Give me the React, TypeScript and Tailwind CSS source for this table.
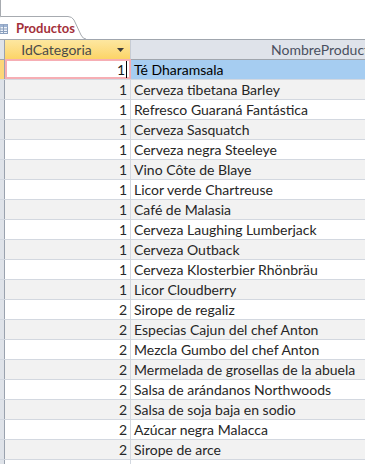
import React from "react";

// rows shown in the datasheet
const rows: [number, string][] = [
  [1, "Té Dharamsala"],
  [1, "Cerveza tibetana Barley"],
  [1, "Refresco Guaraná Fantástica"],
  [1, "Cerveza Sasquatch"],
  [1, "Cerveza negra Steeleye"],
  [1, "Vino Côte de Blaye"],
  [1, "Licor verde Chartreuse"],
  [1, "Café de Malasia"],
  [1, "Cerveza Laughing Lumberjack"],
  [1, "Cerveza Outback"],
  [1, "Cerveza Klosterbier Rhönbräu"],
  [1, "Licor Cloudberry"],
  [2, "Sirope de regaliz"],
  [2, "Especias Cajun del chef Anton"],
  [2, "Mezcla Gumbo del chef Anton"],
  [2, "Mermelada de grosellas de la abuela"],
  [2, "Salsa de arándanos Northwoods"],
  [2, "Salsa de soja baja en sodio"],
  [2, "Azúcar negra Malacca"],
  [2, "Sirope de arce"],
  [2, ""],
];

function TableIcon() {
  return (
    <svg width="8" height="10" viewBox="0 0 8 10" className="shrink-0">
      <rect x="0" y="0.5" width="7.5" height="9" fill="#eef3fa" stroke="#8a9fbd" />
      <rect x="0" y="0.5" width="7.5" height="2.5" fill="#9fb4d3" />
      <line x1="0" y1="5" x2="7.5" y2="5" stroke="#8a9fbd" />
      <line x1="0" y1="7.5" x2="7.5" y2="7.5" stroke="#8a9fbd" />
      <line x1="3.5" y1="0.5" x2="3.5" y2="9.5" stroke="#8a9fbd" />
    </svg>
  );
}

function Tab() {
  return (
    <div className="relative flex h-[23px] w-[86px] items-center gap-[8px] pt-[2px]">
      <svg
        width="86"
        height="23"
        viewBox="0 0 86 23"
        className="absolute left-0 top-0"
        aria-hidden="true"
      >
        <path
          d="M-2 23 V3 Q-2 0.5 1 0.5 H68 Q72 0.5 74 4 L81 19 Q83 23 86 23"
          fill="#ffffff"
          stroke="#a7abb0"
        />
      </svg>
      <div className="relative ml-0 flex items-center gap-[8px]">
        <TableIcon />
        <span className="text-[13px] font-bold leading-none text-[#a3303a]">Productos</span>
      </div>
    </div>
  );
}

export default function App() {
  return (
    <div
      className="h-[464px] w-[365px] overflow-hidden bg-white text-[14px]"
      style={{ fontFamily: "Lato, 'Open Sans', sans-serif" }}
    >
      <div className="h-[16px] border-l border-[#a7abb0]" />
      <Tab />

      {/* header */}
      <div className="flex h-[21px] border-y border-[#a0a6ae]">
        <div className="w-[5px] shrink-0 border-r border-[#9aa2ae] bg-[#dfe3e9]" />
        <div className="relative flex w-[126px] shrink-0 items-center justify-center border-r border-[#c7ccd4] bg-gradient-to-b from-[#fde7a0] to-[#fcd466] pr-[22px] text-[#4a4a4a]">
          IdCategoria
          <svg width="7" height="4" viewBox="0 0 7 4" className="absolute right-[6px] top-[8px]">
            <path d="M0 0 H7 L3.5 4 Z" fill="#3c3c3c" />
          </svg>
        </div>
        <div className="flex w-[386px] shrink-0 items-center justify-center bg-[#dfe3ea] text-[#4a5060]">
          NombreProducto
        </div>
      </div>

      {rows.map(([cat, name], i) => {
        const selected = i === 0;
        const bg = i % 2 === 0 ? "bg-white" : "bg-[#f2f2f2]";
        return (
          <div key={i} className={`flex h-[20px] border-b border-[#d3d8e0] ${bg}`}>
            <div
              className={`w-[5px] shrink-0 border-r border-[#9aa2ae] ${
                selected ? "bg-[#fcd77a]" : "bg-[#dfe3e9]"
              }`}
            />
            {selected ? (
              <div className="relative -mt-px flex h-[20px] w-[126px] shrink-0 items-center justify-end border-2 border-[#f6aeb4] bg-white pr-[2px] text-[#1a1a1a]">
                {cat}
                <span className="ml-px h-[17px] w-px bg-black" />
              </div>
            ) : (
              <div className="flex w-[126px] shrink-0 items-center justify-end border-r border-[#d3d8e0] pr-[3px] text-[#262626]">
                {name ? cat : ""}
              </div>
            )}
            <div
              className={`flex flex-1 items-center whitespace-nowrap pl-[3px] ${
                selected ? "bg-[#a6cdf1] text-black" : "text-[#262626]"
              }`}
            >
              {name}
            </div>
          </div>
        );
      })}
    </div>
  );
}
